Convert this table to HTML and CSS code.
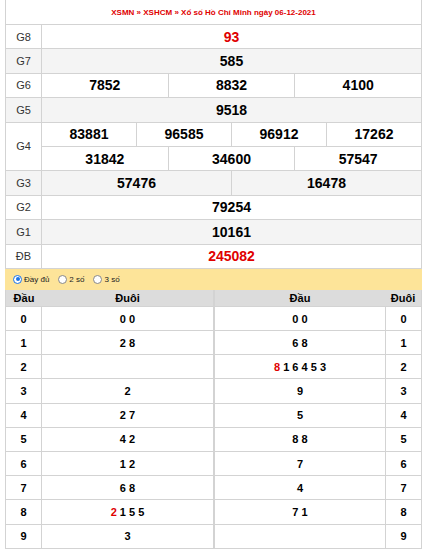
FILE: index.html
```html
<!DOCTYPE html>
<html lang="vi">
<head>
<meta charset="utf-8">
<title>XSHCM 06-12-2021</title>
<link rel="stylesheet" href="styles.css">
</head>
<body>
<div class="page">
  <div class="kq">
    <div class="title"><a href="#">XSMN</a> » <a href="#">XSHCM</a> » Xổ số Hồ Chí Minh ngày 06-12-2021</div>
    <div class="row"><div class="lbl">G8</div><div class="nums"><div class="c red">93</div></div></div>
    <div class="row alt"><div class="lbl">G7</div><div class="nums"><div class="c">585</div></div></div>
    <div class="row"><div class="lbl">G6</div><div class="nums"><div class="c">7852</div><div class="c">8832</div><div class="c">4100</div></div></div>
    <div class="row alt"><div class="lbl">G5</div><div class="nums"><div class="c">9518</div></div></div>
    <div class="row g4"><div class="lbl">G4</div>
      <div class="nums stack">
        <div class="sub"><div class="c">83881</div><div class="c">96585</div><div class="c">96912</div><div class="c">17262</div></div>
        <div class="sub"><div class="c">31842</div><div class="c">34600</div><div class="c">57547</div></div>
      </div>
    </div>
    <div class="row alt"><div class="lbl">G3</div><div class="nums"><div class="c">57476</div><div class="c">16478</div></div></div>
    <div class="row"><div class="lbl">G2</div><div class="nums"><div class="c">79254</div></div></div>
    <div class="row alt"><div class="lbl">G1</div><div class="nums"><div class="c">10161</div></div></div>
    <div class="row"><div class="lbl">ĐB</div><div class="nums"><div class="c red">245082</div></div></div>
  </div>

  <div class="opts">
    <label class="opt"><span class="rd on"></span>Đầy đủ</label>
    <label class="opt"><span class="rd"></span>2 số</label>
    <label class="opt"><span class="rd"></span>3 số</label>
  </div>

  <div class="dd">
    <div class="tbl tl">
      <div class="hd"><div class="k">Đầu</div><div class="v">Đuôi</div></div>
      <div class="r"><div class="k">0</div><div class="v">0 0</div></div>
      <div class="r"><div class="k">1</div><div class="v">2 8</div></div>
      <div class="r"><div class="k">2</div><div class="v"></div></div>
      <div class="r"><div class="k">3</div><div class="v">2</div></div>
      <div class="r"><div class="k">4</div><div class="v">2 7</div></div>
      <div class="r"><div class="k">5</div><div class="v">4 2</div></div>
      <div class="r"><div class="k">6</div><div class="v">1 2</div></div>
      <div class="r"><div class="k">7</div><div class="v">6 8</div></div>
      <div class="r"><div class="k">8</div><div class="v"><span class="red">2</span> 1 5 5</div></div>
      <div class="r"><div class="k">9</div><div class="v">3</div></div>
    </div>
    <div class="tbl tr">
      <div class="hd"><div class="v">Đầu</div><div class="k">Đuôi</div></div>
      <div class="r"><div class="v">0 0</div><div class="k">0</div></div>
      <div class="r"><div class="v">6 8</div><div class="k">1</div></div>
      <div class="r"><div class="v"><span class="red">8</span> 1 6 4 5 3</div><div class="k">2</div></div>
      <div class="r"><div class="v">9</div><div class="k">3</div></div>
      <div class="r"><div class="v">5</div><div class="k">4</div></div>
      <div class="r"><div class="v">8 8</div><div class="k">5</div></div>
      <div class="r"><div class="v">7</div><div class="k">6</div></div>
      <div class="r"><div class="v">4</div><div class="k">7</div></div>
      <div class="r"><div class="v">7 1</div><div class="k">8</div></div>
      <div class="r"><div class="v"></div><div class="k">9</div></div>
    </div>
  </div>
</div>
</body>
</html>
```

FILE: styles.css
```css
* { box-sizing: content-box; }
body {
  margin: 0;
  background: #fff;
  font-family: "Liberation Sans", Arial, sans-serif;
  color: #000;
}
.page { padding: 0 5px; }

.kq {
  border-left: 1px solid #d3d3d3;
  border-right: 1px solid #d3d3d3;
}
.title {
  height: 24px;
  border-bottom: 1px solid #d3d3d3;
  display: flex;
  align-items: center;
  justify-content: center;
  font-size: 8px;
  font-weight: bold;
  color: #e00000;
  white-space: pre;
}
.title a { color: #e00000; text-decoration: none; }

.row {
  display: flex;
  height: 23.4px;
  border-bottom: 1px solid #d3d3d3;
}
.row.alt { background: #f4f4f4; }
.row.g4 { height: 47.8px; }

.lbl {
  width: 35px;
  flex: none;
  border-right: 1px solid #d3d3d3;
  display: flex;
  align-items: center;
  justify-content: center;
  font-size: 11px;
  color: #333;
}
.nums { flex: 1; display: flex; }
.nums.stack { flex-direction: column; }
.sub { flex: 1; display: flex; }
.sub + .sub { border-top: 1px solid #d3d3d3; }
.c {
  flex: 1 1 0;
  display: flex;
  align-items: center;
  justify-content: center;
  font-size: 14px;
  font-weight: bold;
}
.c + .c { border-left: 1px solid #d3d3d3; }
.red { color: #e00000; }

.opts {
  height: 21px;
  background: #fde499;
  display: flex;
  align-items: center;
  padding-left: 8px;
  gap: 9px;
  font-size: 8px;
  color: #222;
}
.opt { display: flex; align-items: center; gap: 2px; }
.rd {
  width: 7px;
  height: 7px;
  border: 1px solid #888;
  border-radius: 50%;
  background: #fff;
  position: relative;
}
.rd.on { border-color: #1a73e8; }
.rd.on::after {
  content: "";
  position: absolute;
  left: 1.5px;
  top: 1.5px;
  width: 4px;
  height: 4px;
  border-radius: 50%;
  background: #1a73e8;
}

.dd { display: flex; }
.tbl {
  border-left: 1px solid #d3d3d3;
  border-right: 1px solid #d3d3d3;
  border-bottom: 1px solid #d3d3d3;
}
.tl { width: 207px; }
.tr { width: 206px; }
.hd {
  display: flex;
  height: 16px;
  background: #dcdcdc;
  font-size: 11px;
  font-weight: bold;
}
.hd .k, .hd .v { display: flex; align-items: center; justify-content: center; }
.tl .hd .k, .tr .hd .k { width: 36px; flex: none; }
.hd .v { flex: 1; }
.r {
  display: flex;
  height: 23.2px;
  border-top: 1px solid #d3d3d3;
  font-size: 11px;
  font-weight: bold;
}
.r .k, .r .v { display: flex; align-items: center; justify-content: center; white-space: pre; }
.r .k { width: 35px; flex: none; }
.r .v { flex: 1; }
.tl .r .k { border-right: 1px solid #d3d3d3; }
.tr .r .k { border-left: 1px solid #d3d3d3; }
```
